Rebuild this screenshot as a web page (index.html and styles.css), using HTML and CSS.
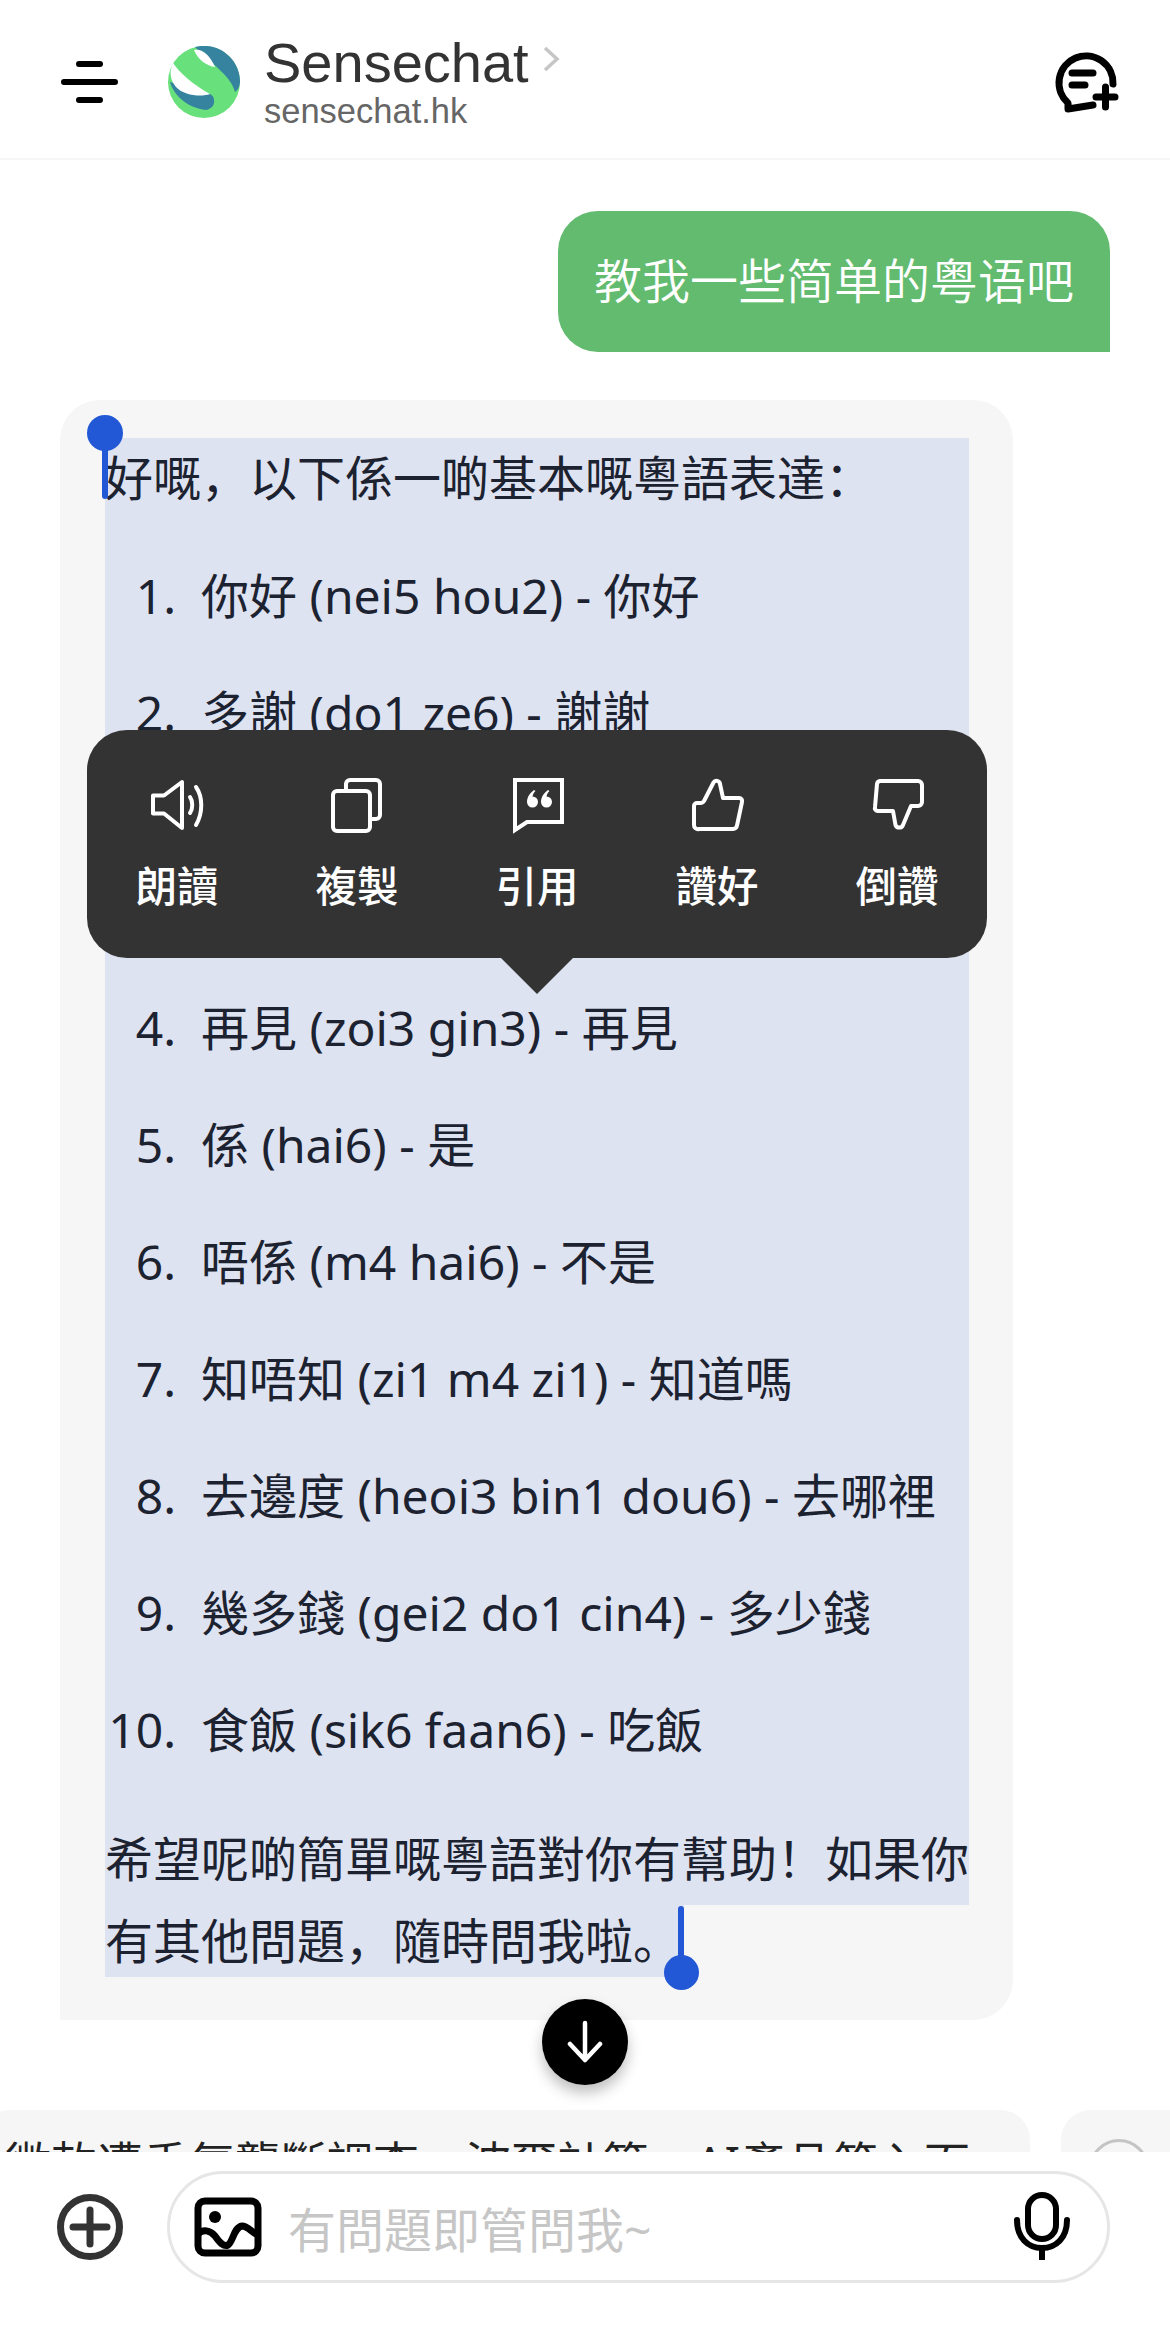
FILE: index.html
```html
<!DOCTYPE html>
<html lang="zh">
<head>
<meta charset="utf-8">
<title>Sensechat</title>
<link rel="stylesheet" href="styles.css">
</head>
<body>
<div class="page">
  <header class="topbar">
    <svg class="icon-menu" viewBox="0 0 60 44" width="60" height="44"><path d="M19 4H40M4 22H55M19 40H40"/></svg>
    <svg class="logo" viewBox="0 0 72 72" width="72" height="72">
      <circle class="logo-green" cx="36" cy="36" r="36"/>
      <path class="logo-teal" d="M27 1A36 36 0 0 1 72 35C72 40 70 44 67 46C63 30 46 20 27 1Z"/>
      <path class="logo-white" d="M26 4C34 2 42 9 47 21C39 20 30 14 26 4Z"/>
      <path class="logo-teal" d="M2 36C6 50 20 62 38 64C44 63 47 58 46 54C46 51 44 49 42 48Z"/>
      <path class="logo-white" d="M5 17C12 27 24 38 42 48C34 51 16 50 8 41C2 34 1 25 5 17Z"/>
    </svg>
    <div class="brand">
      <div class="brand-row">
        <span class="brand-name">Sensechat</span>
        <svg class="chevron" viewBox="0 0 18 28" width="18" height="28"><path d="M3 3L15 14L3 25"/></svg>
      </div>
      <div class="brand-site">sensechat.hk</div>
    </div>
    <svg class="icon-new" viewBox="0 0 76 72" width="76" height="72">
      <path d="M63 38A27 27 0 1 0 18 57L18 63L43 59M22 27H43M22 39H35M46 51H65M55.500 41V61"/>
    </svg>
  </header>

  <main class="chat">
    <div class="bubble-user"><span class="bubble-user-text">教我一些简单的粤语吧</span></div>
    <div class="bubble-ai">
      <div class="selected">
        <p class="para-first">好嘅，以下係一啲基本嘅粵語表達：</p>
        <ol class="phrases">
          <li>你好 (nei5 hou2) - 你好</li>
          <li>多謝 (do1 ze6) - 謝謝</li>
          <li class="phrase-long">唔該 (m4 goi1) - 請／麻煩你，請人幫忙嗰陣時可以用呢句</li>
          <li>再見 (zoi3 gin3) - 再見</li>
          <li>係 (hai6) - 是</li>
          <li>唔係 (m4 hai6) - 不是</li>
          <li>知唔知 (zi1 m4 zi1) - 知道嗎</li>
          <li>去邊度 (heoi3 bin1 dou6) - 去哪裡</li>
          <li>幾多錢 (gei2 do1 cin4) - 多少錢</li>
          <li>食飯 (sik6 faan6) - 吃飯</li>
        </ol>
        <p class="para-close">希望呢啲簡單嘅粵語對你有幫助！如果你</p>
      </div>
      <span class="selected-tail">有其他問題，隨時問我啦。</span>
    </div>
  </main>

  <div class="suggestions">
    <div class="suggest-card">微軟遭香氣壟斷調查、波爾計算、AI產品第入面</div>
    <div class="suggest-card suggest-next"><span class="suggest-ring"></span></div>
  </div>

  <footer class="composer">
    <svg class="icon-plus" viewBox="0 0 66 66" width="66" height="66"><circle cx="33" cy="33" r="29.5"/><path d="M16 33H50M33 16V50"/></svg>
    <div class="input">
      <svg class="icon-image" viewBox="0 0 76 68" width="76" height="68">
        <rect class="img-frame" x="9" y="8" width="60" height="52" rx="7"/>
        <circle class="img-dot" cx="26" cy="24" r="6"/>
        <path class="img-wave" d="M9 41C14 36 21 37 26 43C31 50 35 54 39 52C44 49 45 34 53 33C59 33 63 40 69 42"/>
      </svg>
      <span class="placeholder">有問題即管問我~</span>
      <svg class="icon-mic" viewBox="0 0 60 68" width="60" height="68">
        <rect x="16" y="3" width="28" height="44" rx="14"/>
        <path d="M5 28C5 46 16 56 30 56C44 56 55 46 55 28M30 56V67"/>
      </svg>
    </div>
  </footer>

  <span class="handle handle-start"></span>
  <span class="handle handle-end"></span>

  <div class="popup">
    <div class="popup-item">
      <svg class="popup-icon" viewBox="0 0 60 60" width="60" height="60"><path d="M6 20.500H17L35 7V53L17 38.500H6Z"/><path d="M43 22C46 26 46 34 43 38M49 12C56 22 56 38 49 50"/></svg>
      <span>朗讀</span>
    </div>
    <div class="popup-item">
      <svg class="popup-icon" viewBox="0 0 60 60" width="60" height="60"><rect x="6" y="16" width="37" height="40" rx="4"/><path d="M19 15V9A4 4 0 0 1 23 5H49A4 4 0 0 1 53 9V40A4 4 0 0 1 49 44H43"/></svg>
      <span>複製</span>
    </div>
    <div class="popup-item">
      <svg class="popup-icon popup-icon-quote" viewBox="0 0 60 60" width="60" height="60">
        <path d="M8 5H55V47H20L8 55Z"/>
        <path class="quote-mark" d="M27 15C23 18 20 22 20 27A5.500 5.500 0 1 0 25.500 21.500C26 19 27 17 28.500 16ZM41 15C37 18 34 22 34 27A5.500 5.500 0 1 0 39.500 21.500C40 19 41 17 42.500 16Z"/>
      </svg>
      <span>引用</span>
    </div>
    <div class="popup-item">
      <svg class="popup-icon" viewBox="0 0 60 60" width="60" height="60"><path d="M12 54H46A4 4 0 0 0 50 50.500L55 27A3 3 0 0 0 52 23H36L33 9A3.500 3.500 0 0 0 26.500 7.500L17 26A4 4 0 0 1 14 28H10A3 3 0 0 0 7 31V50A4 4 0 0 0 12 54Z"/></svg>
      <span>讚好</span>
    </div>
    <div class="popup-item">
      <svg class="popup-icon" viewBox="0 0 60 60" width="60" height="60"><path d="M13 6H51A4 4 0 0 1 55 10V27A4 4 0 0 1 51 31H44L36 50A4 4 0 0 1 28.500 50L26 36H11A3 3 0 0 1 8 32L10 9A3.500 3.500 0 0 1 13 6Z"/></svg>
      <span>倒讚</span>
    </div>
  </div>

  <button class="scroll-down" type="button">
    <svg viewBox="0 0 40 44" width="40" height="44"><path d="M20 3V40M5 24L20 40L35 24"/></svg>
  </button>
</div>
</body>
</html>
```
FILE: styles.css
```css
* { box-sizing: border-box; }
html, body { margin: 0; padding: 0; background: #fff; }
body { font-family: "Noto Sans", "Noto Sans CJK SC", sans-serif; }

.page {
  position: relative;
  width: 1170px;
  height: 2330px;
  overflow: hidden;
  display: flex;
  flex-direction: column;
  background: #fff;
}

/* header */
.topbar {
  height: 160px;
  flex: none;
  display: flex;
  align-items: center;
  padding: 0 44px 0 60px;
  border-bottom: 2px solid #f6f6f6;
}
.topbar > * { flex: none; }
.icon-menu { margin-top: 6px; }
.icon-menu path { fill: none; stroke: #000; stroke-width: 6; stroke-linecap: round; }
.logo { margin-left: 48px; margin-top: 6px; }
.logo-green { fill: #68e07c; }
.logo-teal { fill: #35839f; }
.logo-white { fill: #fff; }
.brand { margin-left: 24px; font-family: "Liberation Sans", sans-serif; margin-top: 5px; }
.brand-row { display: flex; align-items: center; height: 62px; }
.brand-name { font-size: 56px; line-height: 62px; color: #333; }
.chevron { margin-left: 13px; margin-top: -8px; }
.chevron path { fill: none; stroke: #c6c6c6; stroke-width: 3.500; }
.brand-site { font-size: 34.500px; line-height: 40px; color: #666; margin-top: -3.500px; }
.icon-new { margin-left: auto; margin-top: 6px; }
.icon-new path { fill: none; stroke: #000; stroke-width: 7; stroke-linecap: round; stroke-linejoin: round; }

/* chat */
.chat { flex: none; padding: 51px 60px 0; display: flex; flex-direction: column; }
.bubble-user {
  align-self: flex-end;
  width: 552px;
  height: 141px;
  padding: 0 36px 8px;
  display: flex;
  align-items: center;
  border-radius: 40px 40px 0 40px;
  background: #62bb6f;
  color: #fff;
  font-family: "Noto Sans CJK SC", sans-serif;
  font-weight: 350;
  font-size: 48px;
  white-space: nowrap;
}
.bubble-ai {
  margin-top: 48px;
  width: 953px;
  padding: 38px 44px 43px 45px;
  background: #f6f6f6;
  border-radius: 40px 40px 40px 0;
  color: #1c2230;
  font-size: 48px;
  line-height: 79px;
}
.selected { width: 864px; background: #dee3f1; padding-bottom: 7.500px; }
.para-first { margin: 0 0 39px; }
.para-close { margin: 49.500px 0 0; white-space: nowrap; }
.phrases { margin: 0; padding: 0 0 0 96px; }
.phrases li { margin-bottom: 38px; }
.phrases .phrase-long { margin-bottom: 40px; }
.phrases li:last-child { margin-bottom: 0; }
.phrases li::marker { content: counter(list-item) ".  "; }
.selected-tail { display: block; width: fit-content; line-height: 72px; background: #dee3f1; padding-right: 3px; }

/* suggestions */
.suggestions {
  flex: none;
  margin-top: 90px;
  margin-left: -20px;
  height: 42px;
  overflow: hidden;
  display: flex;
  gap: 31px;
}
.suggest-card {
  flex: none;
  width: 1050px;
  height: 100px;
  padding: 22px 0 0 25px;
  background: #f6f6f6;
  border-radius: 30px;
  font-size: 46px;
  line-height: 60px;
  color: #222;
  white-space: nowrap;
  overflow: hidden;
}
.suggest-next { width: 300px; padding: 29px 0 0 28px; }
.suggest-ring { display: block; width: 60px; height: 60px; border: 3px solid #c4c4c4; border-radius: 50%; }

/* composer */
.composer {
  flex: 1;
  position: relative;
  display: flex;
  align-items: flex-start;
  padding: 19px 60px 0 57px;
  background: #fff;
}
.icon-plus { flex: none; margin-top: 23px; }
.icon-plus circle, .icon-plus path { fill: none; stroke: #333; stroke-width: 7; stroke-linecap: round; }
.input {
  margin-left: 44px;
  flex: 1;
  height: 112px;
  border: 3px solid #e6e6e6;
  border-radius: 56px;
  display: flex;
  align-items: center;
  padding: 0 35px 0 19px;
}
.icon-image { flex: none; }
.img-frame { fill: none; stroke: #000; stroke-width: 7; }
.img-dot { fill: #000; }
.img-wave { fill: none; stroke: #000; stroke-width: 7; }
.placeholder { margin-left: 23px; font-size: 48px; color: #c6c6c6; white-space: nowrap; }
.icon-mic { flex: none; margin-left: auto; margin-top: -3px; }
.icon-mic rect, .icon-mic path { fill: none; stroke: #000; stroke-width: 6; stroke-linecap: round; }

/* selection handles */
.handle { position: absolute; width: 6px; background: #2257d6; border-radius: 3px; }
.handle::after { content: ""; position: absolute; left: 50%; border-radius: 50%; background: #2257d6; }
.handle-start { left: 102px; top: 440px; height: 59px; }
.handle-start::after { width: 36px; height: 36px; margin-left: -18px; top: -25px; }
.handle-end { left: 678px; top: 1906px; height: 60px; }
.handle-end::after { width: 35px; height: 35px; margin-left: -17.500px; top: 49px; }

/* popup menu */
.popup {
  position: absolute;
  left: 87px;
  top: 730px;
  width: 900px;
  height: 228px;
  background: #333;
  border-radius: 40px;
  display: flex;
  color: #fff;
  font-family: "Noto Sans CJK TC", sans-serif;
  font-size: 41.500px;
  font-weight: 500;
}
.popup::after {
  content: "";
  position: absolute;
  left: 414px;
  top: 228px;
  width: 72px;
  height: 36px;
  background: #333;
  clip-path: polygon(0 0, 100% 0, 50% 100%);
}
.popup-item {
  flex: 1;
  display: flex;
  flex-direction: column;
  align-items: center;
  padding-top: 45px;
  line-height: 58px;
}
.popup-item span { margin-top: 20px; }
.popup-icon path, .popup-icon rect { fill: none; stroke: #fff; stroke-width: 4; stroke-linejoin: round; stroke-linecap: round; }
.popup-icon-quote path { stroke-linejoin: miter; }
.popup-icon-quote .quote-mark { fill: #fff; stroke: none; }

/* scroll to bottom */
.scroll-down {
  position: absolute;
  left: 542px;
  top: 1999px;
  width: 86px;
  height: 86px;
  padding: 0;
  border: 0;
  border-radius: 50%;
  background: #000;
  box-shadow: 0 8px 14px rgba(0, 0, 0, 0.25);
  display: flex;
  align-items: center;
  justify-content: center;
}
.scroll-down path { fill: none; stroke: #fff; stroke-width: 4.500; stroke-linecap: round; stroke-linejoin: round; }
```
